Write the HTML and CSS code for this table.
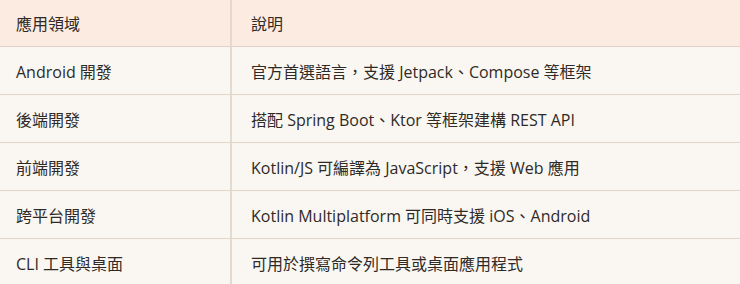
FILE: index.html
```html
<!DOCTYPE html>
<html lang="zh-Hant">
<head>
<meta charset="utf-8">
<link rel="stylesheet" href="styles.css">
</head>
<body>
<table class="grid">
  <thead>
    <tr><th class="c1">應用領域</th><th class="c2">說明</th></tr>
  </thead>
  <tbody>
    <tr><td class="c1">Android 開發</td><td class="c2">官方首選語言，支援 Jetpack、Compose 等框架</td></tr>
    <tr><td class="c1">後端開發</td><td class="c2">搭配 Spring Boot、Ktor 等框架建構 REST API</td></tr>
    <tr><td class="c1">前端開發</td><td class="c2">Kotlin/JS 可編譯為 JavaScript，支援 Web 應用</td></tr>
    <tr><td class="c1">跨平台開發</td><td class="c2">Kotlin Multiplatform 可同時支援 iOS、Android</td></tr>
    <tr><td class="c1">CLI 工具與桌面</td><td class="c2">可用於撰寫命令列工具或桌面應用程式</td></tr>
  </tbody>
</table>
</body>
</html>
```
FILE: styles.css
```css
html, body {
  margin: 0;
  padding: 0;
  background: #faf7f3;
}
body {
  font-family: "Open Sans", "Noto Sans CJK TC", sans-serif;
  font-size: 16px;
  color: #2f2a26;
}
.grid {
  width: 740px;
  border-collapse: collapse;
  table-layout: fixed;
}
.grid th, .grid td {
  text-align: left;
  font-weight: 400;
  padding: 0 16px;
  border-bottom: 1px solid #e0d5cb;
  height: 47px;
  vertical-align: middle;
}
.grid thead th {
  background: #fcebe1;
  height: 46px;
  border-bottom: 1px solid #e2cfc6;
}
.grid .c1 {
  width: 198px;
  border-right: 2px solid #e3d9cf;
}
.grid .c2 {
  padding-left: 19px;
}
.grid tbody tr:last-child td {
  border-bottom: none;
}
```
